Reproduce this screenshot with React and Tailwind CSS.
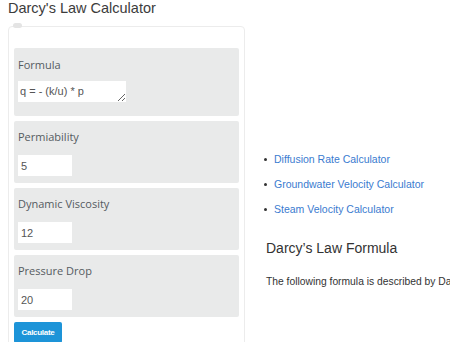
import React from "react";

const sans = { fontFamily: "'Liberation Sans', Arial, sans-serif" };

const Field = ({ label, value }) => (
  <div className="bg-[#e9eaea] rounded-[2px] pt-[8px] pl-[4px] pb-[7px]">
    <div className="font-['Open_Sans',sans-serif] text-[11px] leading-[15px] text-[#555b61] font-medium">
      {label}
    </div>
    <input
      readOnly
      value={value}
      className="block mt-[11px] w-[54px] h-[21px] bg-white border-0 outline-none px-[3px] text-[11px] text-[#555] font-['Liberation_Sans',Arial,sans-serif]"
    />
  </div>
);

const links = [
  "Diffusion Rate Calculator",
  "Groundwater Velocity Calculator",
  "Steam Velocity Calculator",
];

export default function App() {
  return (
    <div
      className="w-[450px] h-[342px] overflow-hidden bg-white text-[#333]"
      style={sans}
    >
      <h1 className="pl-[8px] text-[14.5px] leading-[17px] font-normal text-[#3c3c3c]">
        Darcy's Law Calculator
      </h1>

      <div className="flex mt-[9px] items-start">
        {/* calculator card */}
        <div className="relative ml-[8px] w-[237px] border border-[#ececec] rounded-[4px] pt-[21px] px-[5px] pb-[20px] shrink-0">
          <span className="absolute -top-[4px] left-[4px] w-[9px] h-[5px] rounded-full bg-[#e4e4e4]" />

          <div className="flex flex-col gap-[5px]">
            <div className="bg-[#e9eaea] rounded-[2px] pt-[9px] pl-[4px] pb-[14px]">
              <div className="font-['Open_Sans',sans-serif] text-[11px] leading-[15px] text-[#555b61] font-medium">
                Formula
              </div>
              <textarea
                readOnly
                value="q = - (k/u) * p"
                className="block mt-[9px] w-[108px] h-[21px] min-h-[21px] bg-white border-0 outline-none pl-[2px] pt-[3px] text-[11px] leading-[14px] text-[#555] overflow-hidden font-['Liberation_Sans',Arial,sans-serif]"
              />
            </div>
            <Field label="Permiability" value="5" />
            <Field label="Dynamic Viscosity" value="12" />
            <Field label="Pressure Drop" value="20" />
          </div>

          <button className="mt-[5px] w-[48px] h-[21px] rounded-[2px] bg-[#1d94d8] text-white text-[8px] font-bold tracking-[-0.3px]">
            Calculate
          </button>
        </div>

        {/* right column */}
        <div className="ml-[21px] flex-1 min-w-0 whitespace-nowrap">
          <ul className="mt-[125px] flex flex-col gap-[9px]">
            {links.map((l) => (
              <li key={l} className="flex items-center text-[10.5px] leading-[16px]">
                <span className="w-[3px] h-[3px] rounded-full bg-[#333] -ml-[2px] mr-[7px]" />
                <a href="#" className="text-[#3a7bcf]">
                  {l}
                </a>
              </li>
            ))}
          </ul>
          <h2 className="mt-[23px] text-[14px] leading-[17px] text-[#333]">
            Darcy’s Law Formula
          </h2>
          <p className="mt-[18px] text-[10.3px] leading-[14px] text-[#333]">
            The following formula is described by Darcy's law
          </p>
        </div>
      </div>
    </div>
  );
}
